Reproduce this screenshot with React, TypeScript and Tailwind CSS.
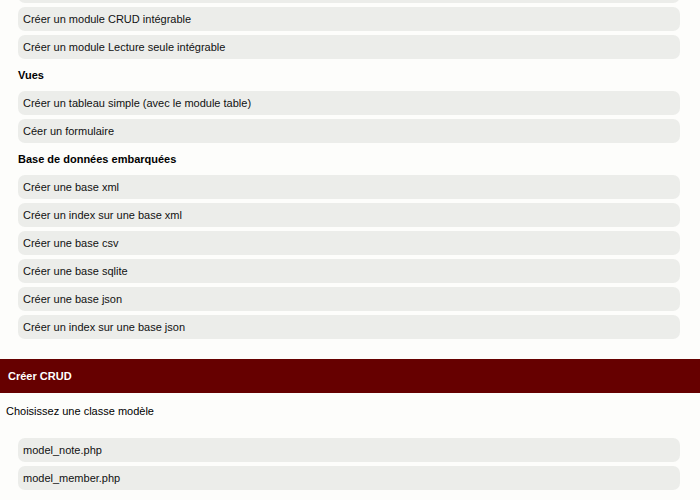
import React from 'react';

const Item = ({ label, className = '' }: { label: string; className?: string }) => (
  <div className={`h-6 rounded-[7px] bg-[#ecedea] px-[5px] text-[11px] leading-6 text-[#111] ${className}`}>
    {label}
  </div>
);

const Heading = ({ label }: { label: string }) => (
  <div className="h-8 text-[11px] font-bold leading-8 text-black">{label}</div>
);

function App() {
  return (
    <div className="min-h-[500px] overflow-hidden bg-[#fdfdfb] font-['Liberation_Sans',Arial,sans-serif]">
      <div className="flex flex-col gap-1 pl-[18px] pr-[20px]">
        {/* previous row, scrolled out of view */}
        <div className="-mt-[21px] h-6 rounded-[7px] bg-[#ecedea]" />
        <Item label="Créer un module CRUD intégrable" />
        <Item label="Créer un module Lecture seule intégrable" />
      </div>
      <div className="pl-[18px] pr-[20px]">
        <Heading label="Vues" />
        <div className="flex flex-col gap-1">
          <Item label="Créer un tableau simple (avec le module table)" />
          <Item label="Céer un formulaire" />
        </div>
        <Heading label="Base de données embarquées" />
        <div className="flex flex-col gap-1">
          <Item label="Créer une base xml" />
          <Item label="Créer un index sur une base xml" />
          <Item label="Créer une base csv" />
          <Item label="Créer une base sqlite" />
          <Item label="Créer une base json" />
          <Item label="Créer un index sur une base json" />
        </div>
      </div>
      <div className="mt-5 h-[34px] bg-[#660000] px-2 text-[11px] font-bold leading-[34px] text-white">
        Créer CRUD
      </div>
      <div className="px-[6px] pt-[11px] pb-[9px] text-[11px] leading-[15px] text-black">
        Choisissez une classe modèle
      </div>
      <div className="mt-[10px] flex flex-col gap-1 pl-[18px] pr-[20px]">
        <Item label="model_note.php" />
        <Item label="model_member.php" />
      </div>
    </div>
  );
}

export default App;
